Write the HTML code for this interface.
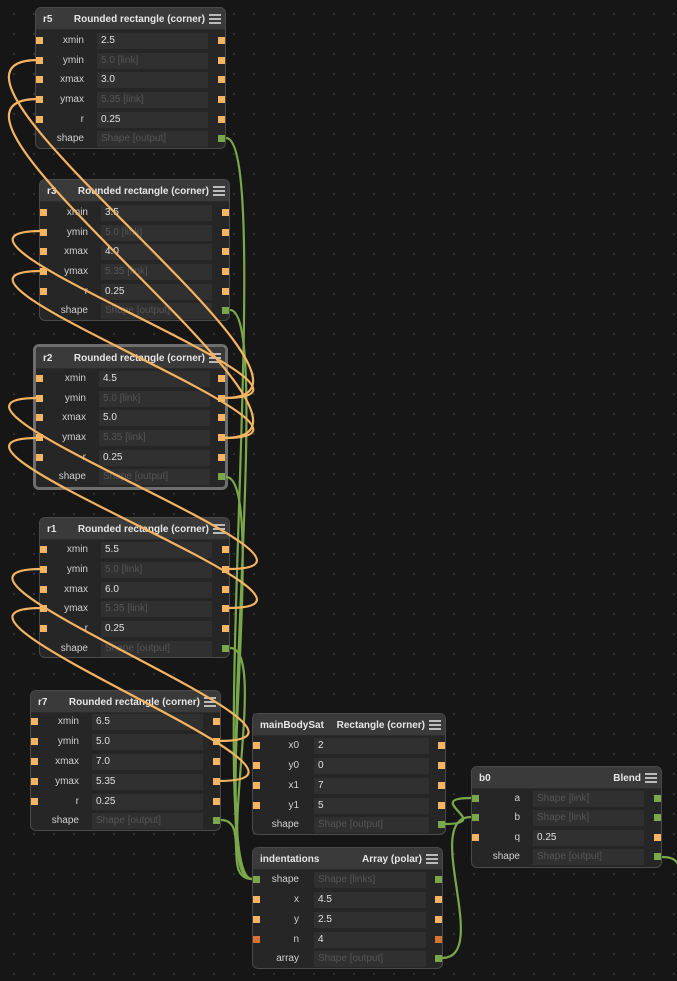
<!DOCTYPE html>
<html><head><meta charset="utf-8"><style>
*{box-sizing:border-box;margin:0;padding:0}
body{width:677px;height:981px;overflow:hidden;background:#161616;background-image:radial-gradient(circle,#3a3a3a 0.8px,transparent 1px);background-size:20px 20px;background-position:4px 4px;font-family:"Liberation Sans",sans-serif;position:relative}
.n{position:absolute;width:191px;background:#262626;border:1px solid #4a4a4a;border-radius:6px;overflow:visible}
.n.sel{border:3px solid #6e6e6e}
.h{height:22px;background:#3a3a3a;border-radius:5px 5px 0 0;border-bottom:1px solid #2c2c2c;color:#e6e6e6;font-weight:bold;font-size:10px;line-height:23px;padding-left:7px;position:relative}
.h .t{position:absolute;right:20px;top:0}
.m{position:absolute;right:4px;top:6px;width:12px;height:10px;border-top:2px solid #bbb;border-bottom:2px solid #bbb}
.m:after{content:"";position:absolute;left:0;right:0;top:2px;height:2px;background:#bbb}
.r{position:absolute;left:0;width:100%;height:20px;margin-top:1px}
.r .l{position:absolute;left:0;width:48px;text-align:right;color:#d0d0d0;font-size:10px;line-height:20px}
.r .f{position:absolute;left:61px;width:111px;top:2px;height:16px;background:#303030;color:#e0e0e0;font-size:10px;line-height:16px;padding-left:4px}
.r .f.p{color:#555}
.pl,.pr{position:absolute;top:6px;width:7px;height:7px;background:#f5b461}
.pl{left:0}.pr{right:0}
.g{background:#7aa74a!important}.o{background:#d87432!important}
svg{position:absolute;left:0;top:0}
</style></head><body>

<div class="n" style="left:35px;top:7px;height:142px"><div class="h">r5<span class="t">Rounded rectangle (corner)</span><div class="m"></div></div>
<div class="r" style="top:22px"><i class="pl"></i><span class="l">xmin</span><span class="f">2.5</span><i class="pr"></i></div>
<div class="r" style="top:42px"><i class="pl"></i><span class="l">ymin</span><span class="f p">5.0 [link]</span><i class="pr"></i></div>
<div class="r" style="top:61px"><i class="pl"></i><span class="l">xmax</span><span class="f">3.0</span><i class="pr"></i></div>
<div class="r" style="top:81px"><i class="pl"></i><span class="l">ymax</span><span class="f p">5.35 [link]</span><i class="pr"></i></div>
<div class="r" style="top:101px"><i class="pl"></i><span class="l">r</span><span class="f">0.25</span><i class="pr"></i></div>
<div class="r" style="top:120px"><span class="l">shape</span><span class="f p">Shape [output]</span><i class="pr g"></i></div>
</div>

<div class="n" style="left:39px;top:179px;height:142px"><div class="h">r3<span class="t">Rounded rectangle (corner)</span><div class="m"></div></div>
<div class="r" style="top:22px"><i class="pl"></i><span class="l">xmin</span><span class="f">3.5</span><i class="pr"></i></div>
<div class="r" style="top:42px"><i class="pl"></i><span class="l">ymin</span><span class="f p">5.0 [link]</span><i class="pr"></i></div>
<div class="r" style="top:61px"><i class="pl"></i><span class="l">xmax</span><span class="f">4.0</span><i class="pr"></i></div>
<div class="r" style="top:81px"><i class="pl"></i><span class="l">ymax</span><span class="f p">5.35 [link]</span><i class="pr"></i></div>
<div class="r" style="top:101px"><i class="pl"></i><span class="l">r</span><span class="f">0.25</span><i class="pr"></i></div>
<div class="r" style="top:120px"><span class="l">shape</span><span class="f p">Shape [output]</span><i class="pr g"></i></div>
</div>

<div class="n sel" style="left:33px;top:344px;height:146px;width:195px"><div class="h">r2<span class="t">Rounded rectangle (corner)</span><div class="m"></div></div>
<div class="r" style="top:21px"><i class="pl"></i><span class="l" style="width:50px">xmin</span><span class="f" style="left:63px">4.5</span><i class="pr"></i></div>
<div class="r" style="top:41px"><i class="pl"></i><span class="l" style="width:50px">ymin</span><span class="f p" style="left:63px">5.0 [link]</span><i class="pr"></i></div>
<div class="r" style="top:60px"><i class="pl"></i><span class="l" style="width:50px">xmax</span><span class="f" style="left:63px">5.0</span><i class="pr"></i></div>
<div class="r" style="top:80px"><i class="pl"></i><span class="l" style="width:50px">ymax</span><span class="f p" style="left:63px">5.35 [link]</span><i class="pr"></i></div>
<div class="r" style="top:100px"><i class="pl"></i><span class="l" style="width:50px">r</span><span class="f" style="left:63px">0.25</span><i class="pr"></i></div>
<div class="r" style="top:119px"><span class="l" style="width:50px">shape</span><span class="f p" style="left:63px">Shape [output]</span><i class="pr g"></i></div>
</div>

<div class="n" style="left:39px;top:517px;height:141px"><div class="h">r1<span class="t">Rounded rectangle (corner)</span><div class="m"></div></div>
<div class="r" style="top:21px"><i class="pl"></i><span class="l">xmin</span><span class="f">5.5</span><i class="pr"></i></div>
<div class="r" style="top:41px"><i class="pl"></i><span class="l">ymin</span><span class="f p">5.0 [link]</span><i class="pr"></i></div>
<div class="r" style="top:61px"><i class="pl"></i><span class="l">xmax</span><span class="f">6.0</span><i class="pr"></i></div>
<div class="r" style="top:80px"><i class="pl"></i><span class="l">ymax</span><span class="f p">5.35 [link]</span><i class="pr"></i></div>
<div class="r" style="top:100px"><i class="pl"></i><span class="l">r</span><span class="f">0.25</span><i class="pr"></i></div>
<div class="r" style="top:120px"><span class="l">shape</span><span class="f p">Shape [output]</span><i class="pr g"></i></div>
</div>

<div class="n" style="left:30px;top:690px;height:141px"><div class="h">r7<span class="t">Rounded rectangle (corner)</span><div class="m"></div></div>
<div class="r" style="top:20px"><i class="pl"></i><span class="l">xmin</span><span class="f">6.5</span><i class="pr"></i></div>
<div class="r" style="top:40px"><i class="pl"></i><span class="l">ymin</span><span class="f">5.0</span><i class="pr"></i></div>
<div class="r" style="top:60px"><i class="pl"></i><span class="l">xmax</span><span class="f">7.0</span><i class="pr"></i></div>
<div class="r" style="top:80px"><i class="pl"></i><span class="l">ymax</span><span class="f">5.35</span><i class="pr"></i></div>
<div class="r" style="top:100px"><i class="pl"></i><span class="l">r</span><span class="f">0.25</span><i class="pr"></i></div>
<div class="r" style="top:119px"><span class="l">shape</span><span class="f p">Shape [output]</span><i class="pr g"></i></div>
</div>

<div class="n" style="left:252px;top:713px;height:122px;width:194px"><div class="h">mainBodySat<span class="t">Rectangle (corner)</span><div class="m"></div></div>
<div class="r" style="top:21px"><i class="pl"></i><span class="l" style="width:46px">x0</span><span class="f" style="width:115px">2</span><i class="pr"></i></div>
<div class="r" style="top:41px"><i class="pl"></i><span class="l" style="width:46px">y0</span><span class="f" style="width:115px">0</span><i class="pr"></i></div>
<div class="r" style="top:61px"><i class="pl"></i><span class="l" style="width:46px">x1</span><span class="f" style="width:115px">7</span><i class="pr"></i></div>
<div class="r" style="top:81px"><i class="pl"></i><span class="l" style="width:46px">y1</span><span class="f" style="width:115px">5</span><i class="pr"></i></div>
<div class="r" style="top:100px"><span class="l" style="width:46px">shape</span><span class="f p" style="width:115px">Shape [output]</span><i class="pr g"></i></div>
</div>

<div class="n" style="left:252px;top:847px;height:122px"><div class="h">indentations<span class="t">Array (polar)</span><div class="m"></div></div>
<div class="r" style="top:21px"><i class="pl g"></i><span class="l" style="width:46px">shape</span><span class="f p" style="width:112px">Shape [links]</span><i class="pr g"></i></div>
<div class="r" style="top:41px"><i class="pl"></i><span class="l" style="width:46px">x</span><span class="f" style="width:112px">4.5</span><i class="pr"></i></div>
<div class="r" style="top:61px"><i class="pl"></i><span class="l" style="width:46px">y</span><span class="f" style="width:112px">2.5</span><i class="pr"></i></div>
<div class="r" style="top:81px"><i class="pl o"></i><span class="l" style="width:46px">n</span><span class="f" style="width:112px">4</span><i class="pr o"></i></div>
<div class="r" style="top:100px"><span class="l" style="width:46px">array</span><span class="f p" style="width:112px">Shape [output]</span><i class="pr g"></i></div>
</div>

<div class="n" style="left:471px;top:766px;height:102px"><div class="h">b0<span class="t">Blend</span><div class="m"></div></div>
<div class="r" style="top:21px"><i class="pl g"></i><span class="l" style="width:48px">a</span><span class="f p">Shape [link]</span><i class="pr g"></i></div>
<div class="r" style="top:40px"><i class="pl g"></i><span class="l" style="width:48px">b</span><span class="f p">Shape [link]</span><i class="pr g"></i></div>
<div class="r" style="top:60px"><i class="pl"></i><span class="l" style="width:48px">q</span><span class="f">0.25</span><i class="pr"></i></div>
<div class="r" style="top:79px"><span class="l" style="width:48px">shape</span><span class="f p">Shape [output]</span><i class="pr g"></i></div>
</div>

<svg width="677" height="981" fill="none" stroke-width="2.2">
<g stroke="#7aa74a">
<path d="M226 138 C276 138,202 879,252 879"/>
<path d="M230 310 C276 310,206 879,252 879"/>
<path d="M226 477 C270 477,208 879,252 879"/>
<path d="M230 648 C270 648,212 879,252 879"/>
<path d="M221 820 C250 820,222 879,252 879"/>
<path d="M445 824 C495 824,421 798,471 798"/>
<path d="M442 958 C492 958,421 817,471 817"/>
<path d="M662 857 C690 857,672 880,690 900"/>
</g>
<g stroke="#f5b461">
<path d="M224 398 C374 398,-112 60,38 60"/>
<path d="M224 438 C374 438,-112 99,38 99"/>
<path d="M224 398 C374 398,-108 231,42 231"/>
<path d="M224 438 C374 438,-108 271,42 271"/>
<path d="M228 569 C378 569,-112 398,38 398"/>
<path d="M228 608 C378 608,-112 438,38 438"/>
<path d="M219 741 C369 741,-108 569,42 569"/>
<path d="M219 781 C369 781,-108 608,42 608"/>
</g>
</svg>
</body></html>
